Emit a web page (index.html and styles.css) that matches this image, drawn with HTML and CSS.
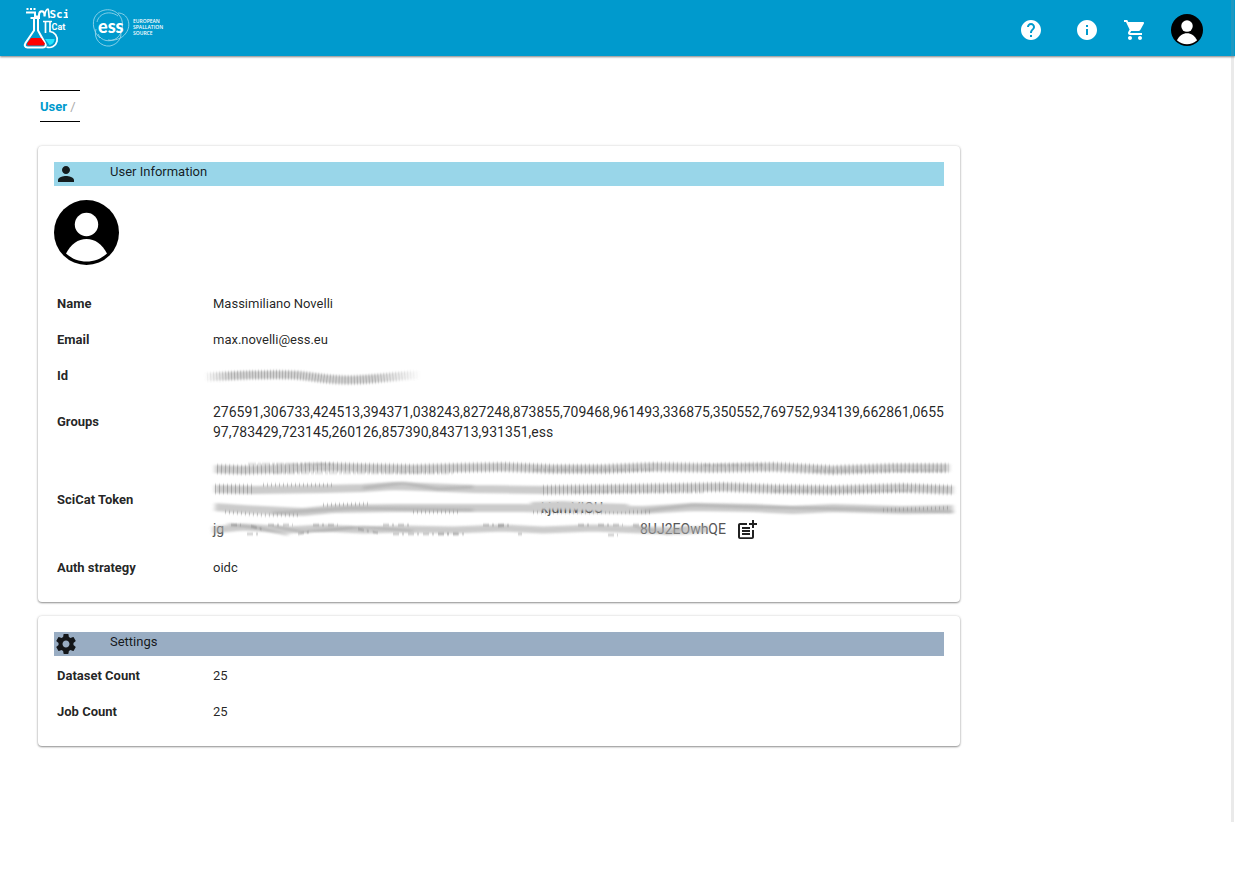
FILE: index.html
```html
<!DOCTYPE html>
<html lang="en">
<head>
<meta charset="utf-8">
<meta name="viewport" content="width=device-width, initial-scale=1">
<title>SciCat - User</title>
<link rel="stylesheet" href="styles.css">
</head>
<body>
<svg class="defs" aria-hidden="true">
  <symbol id="avatar" viewBox="0 0 65 65">
    <circle cx="32.5" cy="32.5" r="32.5" fill="#000"/>
    <circle cx="32.5" cy="24.5" r="11.7" fill="#fff"/>
    <path d="M12 53.5C17 44 24 39 32.500 39S48 44 53 53.500C47 59 40 61.500 32.500 61.500S18 59 12 53.500z" fill="#fff"/>
  </symbol>
</svg>
<header class="topbar">
  <a class="logo" href="#" aria-label="SciCat">
    <svg width="46" height="44" viewBox="22 6 46 44" fill="none">
      <g stroke="#fff" stroke-width="2">
        <path d="M26.500 9h2M30 9h2M33.500 9h2" stroke-width="2"/>
        <path d="M26 12.500h9v4h4v-1.500c0-5 5.500-5 5.500 0v1.500"/>
        <path d="M44.500 16c1-6 2-7 3.500-7 1 0 .5 7 1.500 9" stroke-width="1.700"/>
        <path d="M30.500 18h9.500M34 18v12.500L25.500 43c-1.500 2.500-.5 4.500 2 4.500H43c2.500 0 3.500-2 2-4.500L38 30.500V18"/>
        <path d="M43 21.500h9M45.500 22v11M50 22v9.500a8 8 0 1 1-3.500 15.500" stroke-width="1.700"/>
      </g>
      <path d="M31 38h10l4 5.500-1 2H27.500l-.5-2z" fill="#f00"/>
      <path d="M45 39h9.500c0 3-2 5.500-5 6z" fill="#22e6ff"/>
      <text class="logo-sci" x="49.500" y="18">Sci</text>
      <text class="logo-cat" x="51.500" y="30">Cat</text>
    </svg>
  </a>
  <a class="logo" href="#" aria-label="European Spallation Source">
    <svg width="74" height="42" viewBox="91 7 74 42" fill="none">
      <g stroke="#fff" stroke-width=".8" opacity=".65">
        <path d="M119 15C113 7 98 8 94 19C92 26 95 34 100 38"/>
        <path d="M118 13C128 13 132 25 126 33C122 39 114 41 108 40"/>
        <path d="M96 29C93 39 101 47 110 46C119 44 123 36 120 30"/>
        <path d="M119 15C124 20 124 32 117 38C110 43 101 41 98 34"/>
        <path d="M97 22C99 13 110 10 118 16"/>
      </g>
      <text class="logo-ess" x="98" y="33">ess</text>
      <g class="logo-small">
        <text x="133" y="23">EUROPEAN</text>
        <text x="133" y="29">SPALLATION</text>
        <text x="133" y="35">SOURCE</text>
      </g>
    </svg>
  </a>
  <nav class="tools">
    <a class="tool wide" href="#" aria-label="Help"><svg viewBox="0 0 24 24"><path d="M12 2C6.480 2 2 6.480 2 12s4.480 10 10 10 10-4.480 10-10S17.520 2 12 2zm1 17h-2v-2h2v2zm2.070-7.750l-.9.920C13.450 12.900 13 13.500 13 15h-2v-.5c0-1.100.45-2.100 1.170-2.830l1.240-1.260c.37-.36.59-.86.59-1.410 0-1.100-.9-2-2-2s-2 .9-2 2H8c0-2.210 1.790-4 4-4s4 1.790 4 4c0 .88-.36 1.680-.93 2.250z"/></svg></a>
    <a class="tool" href="#" aria-label="About"><svg viewBox="0 0 24 24"><path d="M12 2C6.480 2 2 6.480 2 12s4.480 10 10 10 10-4.480 10-10S17.520 2 12 2zm1 15h-2v-6h2v6zm0-8h-2V7h2v2z"/></svg></a>
    <a class="tool" href="#" aria-label="Cart"><svg viewBox="0 0 24 24"><path d="M7 18c-1.100 0-1.990.9-1.990 2S5.900 22 7 22s2-.9 2-2-.9-2-2-2zM1 2v2h2l3.600 7.590-1.350 2.450c-.16.28-.25.61-.25.960 0 1.100.9 2 2 2h12v-2H7.420c-.14 0-.25-.11-.25-.25l.03-.12.9-1.630h7.450c.75 0 1.410-.41 1.750-1.030l3.580-6.490c.08-.14.12-.31.12-.48 0-.55-.45-1-1-1H5.210l-.94-2H1zm16 16c-1.100 0-1.990.9-1.990 2s.89 2 1.990 2 2-.9 2-2-.9-2-2-2z"/></svg></a>
    <button class="account" type="button" aria-label="Account"><svg width="32" height="32"><use href="#avatar"/></svg></button>
  </nav>
</header>

<main class="page">
  <nav class="crumbs" aria-label="Breadcrumb"><a href="#">User</a> <span>/</span></nav>

  <section class="card">
    <h2 class="card-title info">
      <svg viewBox="0 0 24 24" width="24" height="24"><path d="M12 12c2.210 0 4-1.790 4-4s-1.790-4-4-4-4 1.790-4 4 1.790 4 4 4zm0 2c-2.670 0-8 1.340-8 4v2h16v-2c0-2.660-5.330-4-8-4z"/></svg>
      <span>User Information</span>
    </h2>
    <svg class="portrait" width="65" height="65" role="img" aria-label="Profile picture"><use href="#avatar"/></svg>
    <table class="facts">
      <tr><th scope="row">Name</th><td>Massimiliano Novelli</td></tr>
      <tr><th scope="row">Email</th><td>max.novelli@ess.eu</td></tr>
      <tr><th scope="row">Id</th><td>
        <svg class="smear" width="220" height="20" viewBox="0 0 220 20" aria-label="Hidden">
          <defs>
            <filter id="soft" filterUnits="userSpaceOnUse" x="-20" y="-20" width="780" height="110"><feGaussianBlur stdDeviation="2 1.200"/></filter>
            <filter id="fine" filterUnits="userSpaceOnUse" x="-20" y="-20" width="780" height="110"><feGaussianBlur stdDeviation=".5 .8"/></filter>
            <linearGradient id="fade" gradientUnits="userSpaceOnUse" x1="-8" y1="0" x2="208" y2="0"><stop offset="0" stop-color="#888" stop-opacity=".1"/><stop offset=".12" stop-color="#888"/><stop offset=".78" stop-color="#888"/><stop offset="1" stop-color="#888" stop-opacity="0"/></linearGradient>
          </defs>
          <path d="M-6 11C30 9 60 8 80 9S110 14 135 14S180 10 206 9" stroke="url(#fade)" stroke-width="8" opacity=".4" filter="url(#soft)"/>
          <path d="M-6 11C30 9 60 8 80 9S110 14 135 14S180 10 206 9" stroke="url(#fade)" stroke-width="9" stroke-dasharray="1 2" opacity=".45" filter="url(#fine)"/>
        </svg>
      </td></tr>
      <tr><th scope="row">Groups</th><td class="numbers">276591,306733,424513,394371,038243,827248,873855,709468,961493,336875,350552,769752,934139,662861,0655<wbr>97,783429,723145,260126,857390,843713,931351,ess</td></tr>
      <tr class="token"><th scope="row">SciCat Token</th><td>
        <svg class="smear" width="734" height="60" viewBox="0 0 734 60" aria-label="Hidden">
          <g stroke="#999" stroke-width="8" opacity=".5" filter="url(#soft)">
            <path d="M2 11L30 12 60 11 110 9 150 10 200 11 240 10 290 9 340 11 390 11 440 9 500 10 560 9 620 12 680 10 736 10"/>
            <path d="M2 31L40 32 110 31 150 30 180 28 210 29 260 31 330 32 400 31 460 30 510 29 560 31 620 32 690 30 740 32"/>
            <path d="M2 49L30 51 90 54 120 51 180 50 260 50 310 50 350 51 430 52 480 49 540 50 580 52 620 50 690 52 740 51"/>
          </g>
          <g stroke="#777" stroke-width="10" stroke-dasharray="1 3" opacity=".45" filter="url(#fine)">
            <path d="M4 11L30 12 60 11 110 9 150 10 200 11 240 10 290 9 340 11 390 11 440 9 500 10 560 9 620 12 680 10 736 10"/>
            <path d="M2 31H40M330 32L400 31 460 30 510 29 560 31 620 32 690 30 740 32"/>
          </g>
          <g stroke="#777" stroke-width="3" stroke-dasharray="1 3" opacity=".55" filter="url(#fine)">
            <path d="M12 54L50 57 85 57M110 47L155 46M200 54H245M320 54H440M670 52L735 50M50 27H120"/>
          </g>
          <g stroke="#777" stroke-width="1" stroke-dasharray="8 2 3 1" opacity=".5" filter="url(#fine)">
            <path d="M35 6H120M60 15H240M320 12H440M490 7H550M600 13H730M360 34H490M560 33H700"/>
          </g>
          <g stroke="#999" stroke-width="3" opacity=".4" filter="url(#soft)">
            <path d="M150 30L190 25 225 31 260 29M60 55L140 50 260 52M430 53L480 47 540 49 640 51 740 54"/>
          </g>
          <text class="trace" x="328" y="55">kjdmVIOU</text>
          <path d="M318 48L350 47 380 49 415 50" stroke="#ccc" stroke-width="8" filter="url(#soft)"/>
        </svg>
        <div class="token-end">
          <svg class="smear" width="514" height="24" viewBox="0 0 514 24" aria-label="Hidden">
            <text class="trace" x="0" y="16">jg</text>
            <text class="trace" x="427" y="16">8UJ2EOwhQE</text>
            <path d="M0 12L30 9 75 12 110 10 150 12 190 11 240 12 290 10 330 12 380 10 430 12 470 13 495 11" stroke="#aaa" stroke-width="7" opacity=".6" filter="url(#soft)"/>
            <path d="M15 6L45 10 75 17M60 8L90 14 140 9M110 13L150 9 200 13M420 8L455 16M455 16L475 8" stroke="#999" stroke-width="2" opacity=".5" filter="url(#soft)"/>
            <path d="M18 7H28M38 8L52 12M55 7H80M34 16H45M85 16L97 14M100 7H125M145 11L165 15M170 7H200M180 16H255M270 7H292M225 16H245M285 8L300 7M305 16H309M365 7H380M395 17H405M385 7H410M420 7H430" stroke="#555" stroke-width="1" stroke-dasharray="6 3 2 4" opacity=".7" filter="url(#fine)"/>
          </svg>
          <button class="copy" type="button" aria-label="Copy token"><svg viewBox="0 0 24 24" width="24" height="24"><path d="M17 19.220H5V7h7V5H5c-1.100 0-2 .9-2 2v12c0 1.100.9 2 2 2h12c1.100 0 2-.9 2-2v-7h-2v7.220zM19 2h-2v3h-3v2h3v2.990h2V7h3V5h-3zM7 9h8v2H7zM7 12v2h8v-2H7zM7 15h8v2H7z"/></svg></button>
        </div>
      </td></tr>
      <tr><th scope="row">Auth strategy</th><td>oidc</td></tr>
    </table>
  </section>

  <section class="card">
    <h2 class="card-title settings">
      <svg viewBox="0 0 24 24" width="24" height="24"><path d="M19.430 12.980c.04-.32.070-.64.070-.98s-.03-.66-.07-.98l2.110-1.650c.19-.15.240-.42.120-.64l-2-3.460c-.12-.22-.39-.3-.61-.22l-2.490 1c-.52-.4-1.080-.73-1.690-.98l-.38-2.650C14.460 2.180 14.250 2 14 2h-4c-.25 0-.46.18-.49.420l-.38 2.650c-.61.25-1.170.59-1.690.98l-2.490-1c-.23-.09-.49 0-.61.220l-2 3.460c-.13.220-.07.490.120.640l2.110 1.650c-.04.320-.07.650-.07.980s.03.660.070.980l-2.110 1.650c-.19.150-.24.420-.12.640l2 3.460c.12.220.39.300.61.220l2.490-1c.52.400 1.080.730 1.690.980l.38 2.650c.03.240.24.420.49.420h4c.25 0 .46-.18.490-.42l.38-2.650c.61-.25 1.170-.59 1.690-.98l2.490 1c.23.090.49 0 .61-.22l2-3.460c.12-.22.070-.49-.12-.64l-2.110-1.650zM12 15.500c-1.930 0-3.500-1.570-3.500-3.500s1.570-3.500 3.500-3.500 3.500 1.570 3.500 3.500-1.570 3.500-3.500 3.500z"/></svg>
      <span>Settings</span>
    </h2>
    <table class="facts">
      <tr><th scope="row">Dataset Count</th><td>25</td></tr>
      <tr><th scope="row">Job Count</th><td>25</td></tr>
    </table>
  </section>
</main>
</body>
</html>
```

FILE: styles.css
```css
* { box-sizing: border-box; }

body {
  margin: 0;
  background: #fff;
  color: rgba(0, 0, 0, .87);
  font: 13px/20px Roboto, "Open Sans", sans-serif;
}

/* scroll track along the right edge */
body::after {
  content: "";
  position: fixed;
  top: 0;
  right: 1px;
  bottom: 47px;
  width: 3px;
  background: rgba(150, 150, 150, .2);
}

svg { display: block; }
.defs { position: absolute; width: 0; height: 0; }

button {
  padding: 0;
  border: 0;
  background: none;
  color: inherit;
}

.topbar {
  display: flex;
  align-items: center;
  gap: 23px;
  height: 56px;
  padding: 0 32px 0 22px;
  background: #009acd;
  box-shadow: 0 1px 2px rgba(0, 0, 0, .5);
}

.logo text {
  fill: #fff;
  font-weight: bold;
}
.logo .logo-sci { font: bold 12px "DejaVu Sans Mono", monospace; font-size: 11px; }
.logo .logo-cat { font-size: 9px; }
.logo .logo-ess { font: 900 18px Lato, sans-serif; }
.logo .logo-small text { font: 600 5px "Open Sans", sans-serif; }

.tools {
  display: flex;
  align-items: center;
  gap: 24px;
  margin-left: auto;
  padding-top: 4px;
}
.tool svg { width: 24px; height: 24px; fill: #fff; }
.wide { margin-right: 8px; }

.page { padding: 34px 38px; }

.crumbs {
  width: 40px;
  margin: 0 2px 24px;
  padding: 6px 0 4px;
  border: solid #000;
  border-width: 1px 0;
  white-space: nowrap;
}
.crumbs a {
  color: #009acd;
  font-weight: bold;
  text-decoration: none;
}
.crumbs span { color: #aaa; }

.card {
  width: calc(80% - 5px);
  margin-bottom: 14px;
  padding: 16px;
  border-radius: 4px;
  background: #fff;
  box-shadow: 0 1px 2px rgba(0, 0, 0, .4), 0 0 3px rgba(0, 0, 0, .15);
}

.card-title {
  display: flex;
  gap: 32px;
  height: 24px;
  margin: 0 0 2px;
  font-size: 13px;
  font-weight: 400;
}
.card-title svg, .copy svg { fill: rgba(0, 0, 0, .87); }
.info { background: #99d6e9; }
.settings { background: #99adc3; }

.portrait { margin: 14px 0 21px; }

.facts {
  width: calc(100% + 6px);
  border-collapse: collapse;
  table-layout: fixed;
}
.facts tr { height: 36px; }
.facts th, .facts td {
  padding: 8px 3px;
  text-align: left;
  vertical-align: middle;
}
.facts th { width: 156px; }
.facts .numbers { font-size: 14px; }
.facts .token { height: 100px; }

.smear { overflow: visible; fill: none; }
.trace { fill: #555; font-size: 14px; }
.token-end {
  display: flex;
  align-items: center;
  gap: 8px;
}
```
